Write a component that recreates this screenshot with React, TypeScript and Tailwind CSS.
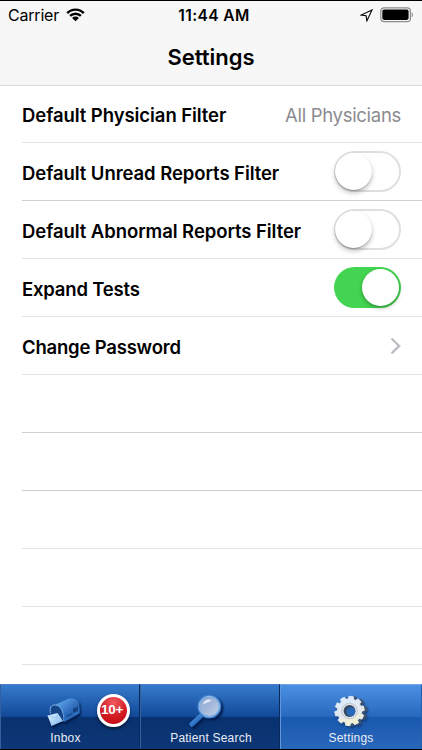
import clsx from "clsx";

const GEAR_TEETH = 10;

const gearPath = (cx: number, cy: number, outer: number, inner: number) => {
  const step = (Math.PI * 2) / GEAR_TEETH;
  const at = (a: number, r: number) =>
    `${(cx + Math.cos(a) * r).toFixed(2)} ${(cy + Math.sin(a) * r).toFixed(2)}`;

  const points: string[] = [];
  for (let i = 0; i < GEAR_TEETH; i++) {
    const a = i * step - Math.PI / 2 + 0.12;
    points.push(
      at(a - step * 0.34, inner),
      at(a - step * 0.24, outer),
      at(a + step * 0.24, outer),
      at(a + step * 0.34, inner)
    );
  }
  return `M${points.join("L")}Z`;
};

const WifiIcon = () => (
  <svg width="19" height="14" viewBox="0 0 20 14">
    <path
      d="M1.3 5A12.2 12.2 0 0 1 18.7 5M4.3 8A8 8 0 0 1 15.7 8"
      fill="none"
      stroke="#000"
      strokeWidth="2.6"
    />
    <path d="M6.4 10.1a5.1 5.1 0 0 1 7.2 0L10 13.6z" />
  </svg>
);

const LocationIcon = () => (
  <svg width="13" height="13" viewBox="0 0 13 13">
    <path
      d="M12 .9 1 6.1l5.1.7.8 5.1z"
      fill="none"
      stroke="#000"
      strokeWidth="1.1"
      strokeLinejoin="miter"
    />
  </svg>
);

const BatteryIcon = () => (
  <svg width="35" height="16" viewBox="0 0 35 16">
    <rect
      x=".8"
      y=".8"
      width="29.6"
      height="13.9"
      rx="3.2"
      fill="none"
      stroke="#8b8b8b"
      strokeWidth="1.2"
    />
    <rect x="2.3" y="2.6" width="26.3" height="10.3" rx="1.8" />
    <path d="M31.7 5.3c1.7.8 1.7 4.3 0 5.1z" fill="#8b8b8b" />
  </svg>
);

const MailboxIcon = () => (
  <svg width="36" height="32" viewBox="0 0 36 32" className="drop-shadow-[1px_2px_1px_#00194a]">
    <defs>
      <linearGradient id="boxTop" x1="0" y1="0" x2="1" y2="1">
        <stop offset="0" stopColor="#5c9be0" />
        <stop offset=".3" stopColor="#4f92de" />
        <stop offset=".6" stopColor="#2b67b4" />
        <stop offset="1" stopColor="#2864b4" />
      </linearGradient>
      <linearGradient id="letter" x1="0" y1="0" x2="1" y2="1">
        <stop offset="0" stopColor="#e4f5ff" />
        <stop offset="1" stopColor="#76b4ee" />
      </linearGradient>
    </defs>
    <path d="M7 9.500 22 3c5-1.500 11.500.5 11.500 6v8L18 26z" fill="url(#boxTop)" />
    <path d="M4.500 17c-1.500-6 1-9 5-8.500 5 .7 9 7 9 17.500l-5-1z" fill="#164587" />
    <path
      d="M4.500 17.500c-1.500-6 1-9 5-8.500 5 .7 8.500 6 8.500 16"
      fill="none"
      stroke="#83bcf3"
      strokeWidth="1"
    />
    <path d="m17.500 17 16-5.500v6L18 26z" fill="#2c6cbd" />
    <path d="m20.500 18.500 6-2.300v3l-6 2.700z" fill="#1f55a0" />
    <path d="M27 17v-4.500l5-1.700v4.200z" fill="#174382" />
    <path d="m1.500 19.500 10-2.500 5.500 8-11.500 5z" fill="url(#letter)" />
    <path d="m1.500 19.500 9.500 2.500.5-5" fill="none" stroke="#85b8e8" strokeWidth=".6" />
  </svg>
);

const SearchIcon = () => (
  <svg width="40" height="36" viewBox="0 0 40 36" className="drop-shadow-[2px_2px_1px_#001c4e]">
    <defs>
      <linearGradient id="lens" x1="0" y1="0" x2="1" y2="1">
        <stop offset="0" stopColor="#8ea8d0" />
        <stop offset=".5" stopColor="#a3b8da" />
        <stop offset="1" stopColor="#c7d7ec" />
      </linearGradient>
      <linearGradient id="handle" x1="0" y1="0" x2="1" y2="1">
        <stop offset="0" stopColor="#4f93e2" />
        <stop offset="1" stopColor="#1558ae" />
      </linearGradient>
    </defs>
    <path d="m6 30.300 8.500-8" stroke="url(#handle)" strokeWidth="5" strokeLinecap="round" />
    <path d="m13.500 22.500 4-4" stroke="#4285d7" strokeWidth="2.400" />
    <circle cx="23.300" cy="12.500" r="10.800" fill="url(#lens)" stroke="#3f7fcb" strokeWidth="2.400" />
    <circle cx="23.300" cy="12.500" r="10.200" fill="none" stroke="#a5cdf5" strokeWidth=".9" />
    <path d="M16.500 10.500c2-4.500 6-5.800 9-4.300-2 2-6 2.500-9 4.300z" fill="#e2ebf7" />
  </svg>
);

const GearIcon = () => (
  <svg width="36" height="36" viewBox="0 0 36 36" className="drop-shadow-[1px_2px_1px_#153f7d]">
    <defs>
      <linearGradient id="gear" x1=".2" y1="0" x2=".5" y2="1">
        <stop offset="0" stopColor="#d9ecff" />
        <stop offset=".65" stopColor="#e4e7ec" />
        <stop offset="1" stopColor="#f8f4c8" />
      </linearGradient>
    </defs>
    <path d={gearPath(19.4, 17.3, 14.6, 11.8)} fill="#41536d" strokeLinejoin="round" stroke="#41536d" />
    <path
      d={gearPath(16.5, 17, 14.8, 12.2)}
      fill="url(#gear)"
      stroke="#e7f1fa"
      strokeWidth=".8"
      strokeLinejoin="round"
    />
    <circle cx="16.500" cy="17" r="7.800" fill="#dce3ea" stroke="#b3bfcd" strokeWidth=".8" />
    <circle cx="16.500" cy="17" r="5.900" fill="#37495f" />
    <circle cx="17.900" cy="17.600" r="4.400" fill="#2868ba" />
  </svg>
);

const Toggle = ({ on }: { on?: boolean }) => (
  <div
    className={clsx(
      "flex h-[41px] w-[67px] items-center rounded-full",
      on ? "justify-end bg-[#43d551] px-[2px]" : "border-2 border-[#dfdfdf] bg-white"
    )}
  >
    <div
      className={clsx(
        "size-[37px] rounded-full bg-white",
        on
          ? "shadow-[0_2px_4px_rgba(0,0,0,0.3)]"
          : "-ml-px shadow-[0_3px_5px_rgba(0,0,0,0.24),0_1px_1px_rgba(0,0,0,0.18)]"
      )}
    />
  </div>
);

const rows: { title: string; accessory: React.ReactNode }[] = [
  {
    title: "Default Physician Filter",
    accessory: (
      <span className="pt-[3px] text-[18.500px] tracking-[-0.3px] text-[#8b8b90]">
        All Physicians
      </span>
    ),
  },
  { title: "Default Unread Reports Filter", accessory: <Toggle /> },
  { title: "Default Abnormal Reports Filter", accessory: <Toggle /> },
  { title: "Expand Tests", accessory: <Toggle on /> },
  {
    title: "Change Password",
    accessory: (
      <svg width="11" height="18" viewBox="0 0 11 18">
        <path d="m1.500 1.500 7.700 7.400-7.700 7.400" fill="none" stroke="#bdbdc2" strokeWidth="2.300" />
      </svg>
    ),
  },
];

const tabs = [
  { title: "Inbox", icon: <MailboxIcon />, badge: "10+" },
  { title: "Patient Search", icon: <SearchIcon /> },
  { title: "Settings", icon: <GearIcon />, active: true },
];

const App = () => {
  return (
    <div className="flex h-[750px] w-[422px] flex-col overflow-hidden bg-white font-['Inter',sans-serif] text-black">
      <header className="h-[86px] shrink-0 border-t border-b border-t-black border-b-[#dadada] bg-[#f7f7f7]">
        <div className="grid h-7 grid-cols-3 items-center pr-[7px] pl-2">
          <div className="flex items-center gap-[7px] text-[16px] leading-none tracking-[-0.2px]">
            <span>Carrier</span>
            <WifiIcon />
          </div>
          <div className="pt-px pl-[5px] text-center text-[15.500px] leading-none font-semibold tracking-[0.4px] whitespace-nowrap">
            11:44 AM
          </div>
          <div className="flex items-center justify-end gap-[7px]">
            <LocationIcon />
            <BatteryIcon />
          </div>
        </div>
        <h1 className="pt-[10px] text-center text-[22px] leading-[36px] font-semibold">
          Settings
        </h1>
      </header>

      <main className="min-h-0 flex-1 overflow-hidden pl-[22px]">
        {rows.map((row, i) => (
          <div
            key={row.title}
            className={clsx(
              "flex items-center justify-between border-b pr-[21px]",
              i === 0 ? "h-[57px]" : "h-[58px]",
              i === 1 ? "border-[#cfcfcf]" : "border-[#e2e2e2]"
            )}
          >
            <span
              className={clsx(
                "text-[18.500px] font-semibold whitespace-nowrap",
                i === 0 ? "pt-[3px]" : "pt-1",
                i < 3 ? "tracking-[-0.07px]" : "tracking-[-0.2px]"
              )}
            >
              {row.title}
            </span>
            {row.accessory}
          </div>
        ))}
        {[0, 1, 2, 3, 4].map((i) => (
          <div
            key={i}
            className={clsx(
              "h-[58px] border-b",
              i === 0 || i === 1 ? "border-[#cfcfcf]" : "border-[#e2e2e2]"
            )}
          />
        ))}
      </main>

      <nav className="grid h-[66px] shrink-0 grid-cols-[140px_140px_142px] border-b border-black">
        {tabs.map((tab) => (
          <div
            key={tab.title}
            className={clsx(
              "relative flex flex-col items-center border-t border-r border-l",
              tab.badge && "pr-[9px]",
              tab.active
                ? "border-t-[#70a6e7] border-r-[#2460b0] border-l-[#6196dc] bg-[linear-gradient(#4b91e3_0%,#2869bd_49%,#1959ae_51%,#2967b9_100%)]"
                : "border-t-[#4b80c6] border-r-[#082a5c] border-l-[#315f9f] bg-[linear-gradient(#367bcc_0%,#124998_49%,#08316e_51%,#0d3777_100%)]"
            )}
          >
            <div
              className={clsx(
                "flex h-[47px] items-center pt-[7px]",
                tab.badge && "pr-[3px]",
                tab.title === "Patient Search" && "pr-[9px]"
              )}
            >
              {tab.icon}
            </div>
            <span
              className={clsx(
                "font-['Liberation_Sans',sans-serif] text-[12px] leading-3 tracking-[0.2px] whitespace-nowrap text-[#e8edf5]",
                !tab.badge && !tab.active && "pl-[2px]"
              )}
            >
              {tab.title}
            </span>
            {tab.badge && (
              <span className="absolute top-[9px] right-[9px] flex size-[33px] items-center justify-center rounded-full border-[3px] border-white bg-[radial-gradient(circle_at_50%_20%,#ef5b61,#d31b23_55%,#bd0710)] pr-[3px] font-['Liberation_Sans',sans-serif] text-[13.500px] font-bold tracking-[-0.3px] text-white shadow-[0_2px_3px_rgba(0,0,0,0.5)]">
                {tab.badge}
              </span>
            )}
          </div>
        ))}
      </nav>
    </div>
  );
};

export default App;
